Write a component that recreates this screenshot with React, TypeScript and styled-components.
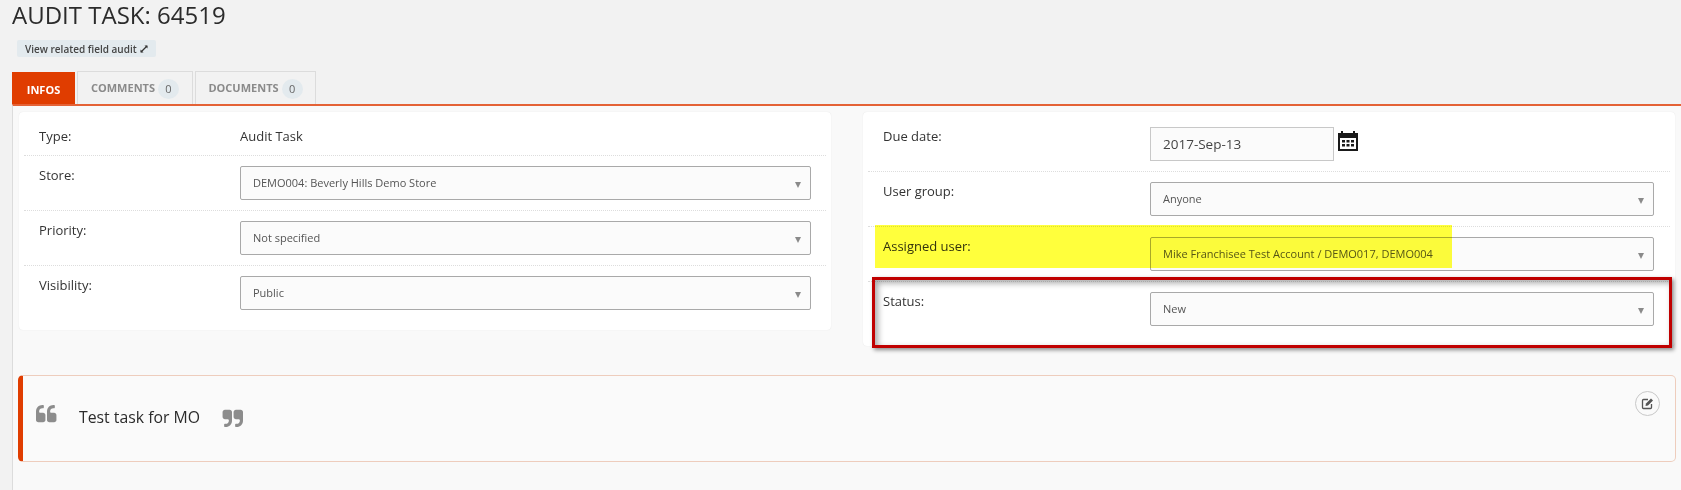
import React from 'react';
import styled, { createGlobalStyle } from 'styled-components';

const Global = createGlobalStyle`
  html, body { margin: 0; padding: 0; background: #f2f2f2; }
  body { font-family: "Open Sans", "Liberation Sans", sans-serif; color: #333; }
`;

const Page = styled.div`
  width: 1681px;
  height: 490px;
  overflow: hidden;
  position: relative;
  display: flex;
  flex-direction: column;
`;

const Title = styled.h1`
  margin: 0;
  padding: 0 0 0 12px;
  height: 40px;
  font-size: 24px;
  line-height: 29px;
  font-weight: 400;
  color: #2b2b2b;
`;

const Badge = styled.a`
  align-self: flex-start;
  margin-left: 17px;
  height: 17px;
  padding: 0 7px 0 8px;
  display: inline-flex;
  align-items: center;
  gap: 2px;
  border-radius: 2px;
  background: #e3eaee;
  color: #444;
  font-size: 10px;
  font-weight: 600;
`;

const TabBar = styled.div`
  margin-top: 14px;
  margin-left: 12px;
  height: 33px;
  display: flex;
  align-items: flex-end;
  gap: 2px;
`;

const Tab = styled.div<{ $active?: boolean; $w: number }>`
  box-sizing: border-box;
  width: ${p => p.$w}px;
  height: ${p => (p.$active ? 32 : 33)}px;
  display: flex;
  align-items: center;
  justify-content: center;
  gap: 3px;
  font-size: 11px;
  font-weight: 700;
  padding: ${p => (p.$active ? '3px 0 0' : '0 0 2px')};
  color: ${p => (p.$active ? '#fff' : '#8a8a8a')};
  background: ${p => (p.$active ? '#e03d00' : '#f2f2f2')};
  border: ${p => (p.$active ? 'none' : '1px solid #dcdcdc')};
  border-bottom: none;
`;

const Count = styled.span`
  width: 21px;
  height: 20px;
  border-radius: 50%;
  background: #e3eaee;
  color: #666;
  font-size: 11px;
  font-weight: 400;
  display: flex;
  align-items: center;
  justify-content: center;
  margin-top: 3px;
`;

const Content = styled.div`
  flex: 1;
  margin-left: 12px;
  background: #f9f9f9;
  border-top: 2px solid #e46236;
  border-left: 1px solid #dcdcdc;
  padding: 6px 6px 0 6px;
  display: flex;
  flex-direction: column;
`;

const Columns = styled.div`
  display: flex;
  align-items: flex-start;
  gap: 32px;
`;

const Card = styled.div<{ $w: number; $labelW: number; $padR: number }>`
  box-sizing: border-box;
  width: ${p => p.$w}px;
  background: #fff;
  border-radius: 4px;
  box-shadow: 0 0 1px rgba(0, 0, 0, 0.12);
  padding: 0 5px;
  position: relative;
  --label-w: ${p => p.$labelW}px;
  --pad-r: ${p => p.$padR}px;
`;

const Row = styled.div<{ $h: number; $last?: boolean }>`
  box-sizing: border-box;
  height: ${p => p.$h}px;
  display: grid;
  grid-template-columns: var(--label-w) 1fr;
  padding: 0 var(--pad-r) 0 15px;
  border-bottom: ${p => (p.$last ? 'none' : '1px dotted #ddd')};
`;

const Label = styled.div<{ $top: number }>`
  font-size: 13px;
  line-height: 18px;
  padding-top: ${p => p.$top}px;
  color: #333;
`;

const Value = styled.div`
  font-size: 13px;
  line-height: 18px;
  padding-top: 15px;
  color: #333;
`;

const SelectBox = styled.div`
  box-sizing: border-box;
  margin-top: 10px;
  height: 34px;
  border: 1px solid #a9a9a9;
  border-radius: 2px;
  background: #fbfbfb;
  padding: 0 12px 2px;
  display: flex;
  align-items: center;
  justify-content: space-between;
  font-size: 11px;
  color: #555;
`;

const Caret = styled.span`
  width: 0;
  height: 0;
  border-left: 3.5px solid transparent;
  border-right: 3.5px solid transparent;
  border-top: 6px solid #8a8a8a;
  margin: 6px -3px 0 0;
`;

const DateWrap = styled.div`
  margin-top: 15px;
  display: flex;
  gap: 4px;
`;

const DateInput = styled.div`
  box-sizing: border-box;
  width: 184px;
  height: 34px;
  border: 1px solid #c8c8c8;
  background: #fbfbfb;
  padding: 0 12px;
  display: flex;
  align-items: center;
  font-size: 13.5px;
  color: #444;
`;

const CalendarIcon = styled.svg`
  width: 20px;
  height: 20px;
  margin-top: 4px;
  color: #1a1a1a;
`;

const Note = styled.div`
  box-sizing: border-box;
  position: relative;
  margin-top: 29px;
  margin-left: -1px;
  width: 1658px;
  height: 87px;
  background: #fafafa;
  border: 1px solid #eecdbd;
  border-left: 5px solid #e03d00;
  border-radius: 5px;
  display: flex;
  align-items: flex-start;
  padding: 29px 0 0 13px;
  font-size: 15.8px;
  line-height: 24px;
  color: #2b2b2b;
`;

const QuoteIcon = styled.svg<{ $flip?: boolean }>`
  width: 22px;
  height: 22px;
  flex: none;
  color: #8c8c8c;
  transform: ${p => (p.$flip ? 'rotate(180deg)' : 'none')};
`;

const NoteText = styled.span`
  margin: 0 21px;
`;

const EditButton = styled.button`
  position: absolute;
  top: 15px;
  right: 15px;
  width: 25px;
  height: 25px;
  border-radius: 50%;
  border: 1px solid #c8c8c8;
  background: #fafafa;
  padding: 0;
  display: flex;
  align-items: center;
  justify-content: center;
  color: #555;
`;

const Highlight = styled.div`
  position: absolute;
  left: 875px;
  top: 225px;
  width: 577px;
  height: 43px;
  background: #ffff3c;
  mix-blend-mode: multiply;
`;

const RedBox = styled.div`
  box-sizing: border-box;
  position: absolute;
  left: 872px;
  top: 277px;
  width: 800px;
  height: 71px;
  border: 3px solid #c00000;
  box-shadow: 2px 2px 4px rgba(0, 0, 0, 0.45), inset 3px 3px 6px rgba(0, 0, 0, 0.35);
`;

const QUOTE =
  'M768 832v384q0 80-56 136t-136 56h-384q-80 0-136-56t-56-136v-704q0-104 40.500-198.500t109.500-163.500 163.500-109.500 198.500-40.500h64q26 0 45 19t19 45v128q0 26-19 45t-45 19h-64q-106 0-181 75t-75 181v32q0 40 28 68t68 28h224q80 0 136 56t56 136zm896 0v384q0 80-56 136t-136 56h-384q-80 0-136-56t-56-136v-704q0-104 40.500-198.500t109.500-163.500 163.500-109.500 198.500-40.500h64q26 0 45 19t19 45v128q0 26-19 45t-45 19h-64q-106 0-181 75t-75 181v32q0 40 28 68t68 28h224q80 0 136 56t56 136z';

const Expand = () => (
  <svg width="10" height="10" viewBox="0 0 10 10" fill="none" stroke="#333" strokeWidth="1.2">
    <path d="M2 8 L8 2" />
    <path d="M5.500 1.500 H8.500 V4.500 Z" fill="#333" stroke="none" />
    <path d="M1.500 5.500 V8.500 H4.500 Z" fill="#333" stroke="none" />
  </svg>
);

const App = () => (
  <Page>
    <Global />
    <Title>AUDIT TASK: 64519</Title>
    <Badge>
      View related field audit <Expand />
    </Badge>
    <TabBar>
      <Tab $active $w={63}>INFOS</Tab>
      <Tab $w={116}>COMMENTS <Count>0</Count></Tab>
      <Tab $w={121}>DOCUMENTS <Count>0</Count></Tab>
    </TabBar>
    <Content>
      <Columns>
        <Card $w={812} $labelW={201} $padR={15}>
          <Row $h={44}>
            <Label $top={15}>Type:</Label>
            <Value>Audit Task</Value>
          </Row>
          <Row $h={55}>
            <Label $top={10}>Store:</Label>
            <SelectBox>DEMO004: Beverly Hills Demo Store<Caret /></SelectBox>
          </Row>
          <Row $h={55}>
            <Label $top={10}>Priority:</Label>
            <SelectBox>Not specified<Caret /></SelectBox>
          </Row>
          <Row $h={64} $last>
            <Label $top={10}>Visibility:</Label>
            <SelectBox>Public<Caret /></SelectBox>
          </Row>
        </Card>
        <Card $w={812} $labelW={267} $padR={16}>
          <Row $h={60}>
            <Label $top={15}>Due date:</Label>
            <DateWrap>
              <DateInput>2017-Sep-13</DateInput>
              <CalendarIcon viewBox="0 0 20 20">
                <path
                  fill="currentColor"
                  fillRule="evenodd"
                  d="M0 2 H3 V0 H5 V2 H15 V0 H17 V2 H20 V20 H0 Z M2 7 V18 H18 V7 Z"
                />
                <path
                  fill="currentColor"
                  d="M4 9h3v2.500h-3zM8.500 9h3v2.500h-3zM13 9h3v2.500h-3zM4 13h3v2.500h-3zM8.500 13h3v2.500h-3zM13 13h3v2.500h-3z"
                />
              </CalendarIcon>
            </DateWrap>
          </Row>
          <Row $h={55}>
            <Label $top={10}>User group:</Label>
            <SelectBox>Anyone<Caret /></SelectBox>
          </Row>
          <Row $h={55}>
            <Label $top={10}>Assigned user:</Label>
            <SelectBox>Mike Franchisee Test Account / DEMO017, DEMO004<Caret /></SelectBox>
          </Row>
          <Row $h={64} $last>
            <Label $top={10}>Status:</Label>
            <SelectBox>New<Caret /></SelectBox>
          </Row>
        </Card>
      </Columns>
      <Note>
        <QuoteIcon viewBox="0 0 1792 1792"><path fill="currentColor" d={QUOTE} /></QuoteIcon>
        <NoteText>Test task for MO</NoteText>
        <QuoteIcon $flip viewBox="0 0 1792 1792"><path fill="currentColor" d={QUOTE} /></QuoteIcon>
        <EditButton aria-label="Edit">
          <svg width="13" height="13" viewBox="0 0 13 13" fill="none">
            <path d="M7 2.500H2.500A1 1 0 0 0 1.500 3.500V10.500A1 1 0 0 0 2.500 11.500H9.500A1 1 0 0 0 10.500 10.500V7" stroke="currentColor" strokeWidth="1.300" />
            <path d="M4.500 9 L5 6.500 L10 1.500 L12 3.500 L7 8.500 Z" fill="currentColor" />
          </svg>
        </EditButton>
      </Note>
    </Content>
    <Highlight />
    <RedBox />
  </Page>
);

export default App;
